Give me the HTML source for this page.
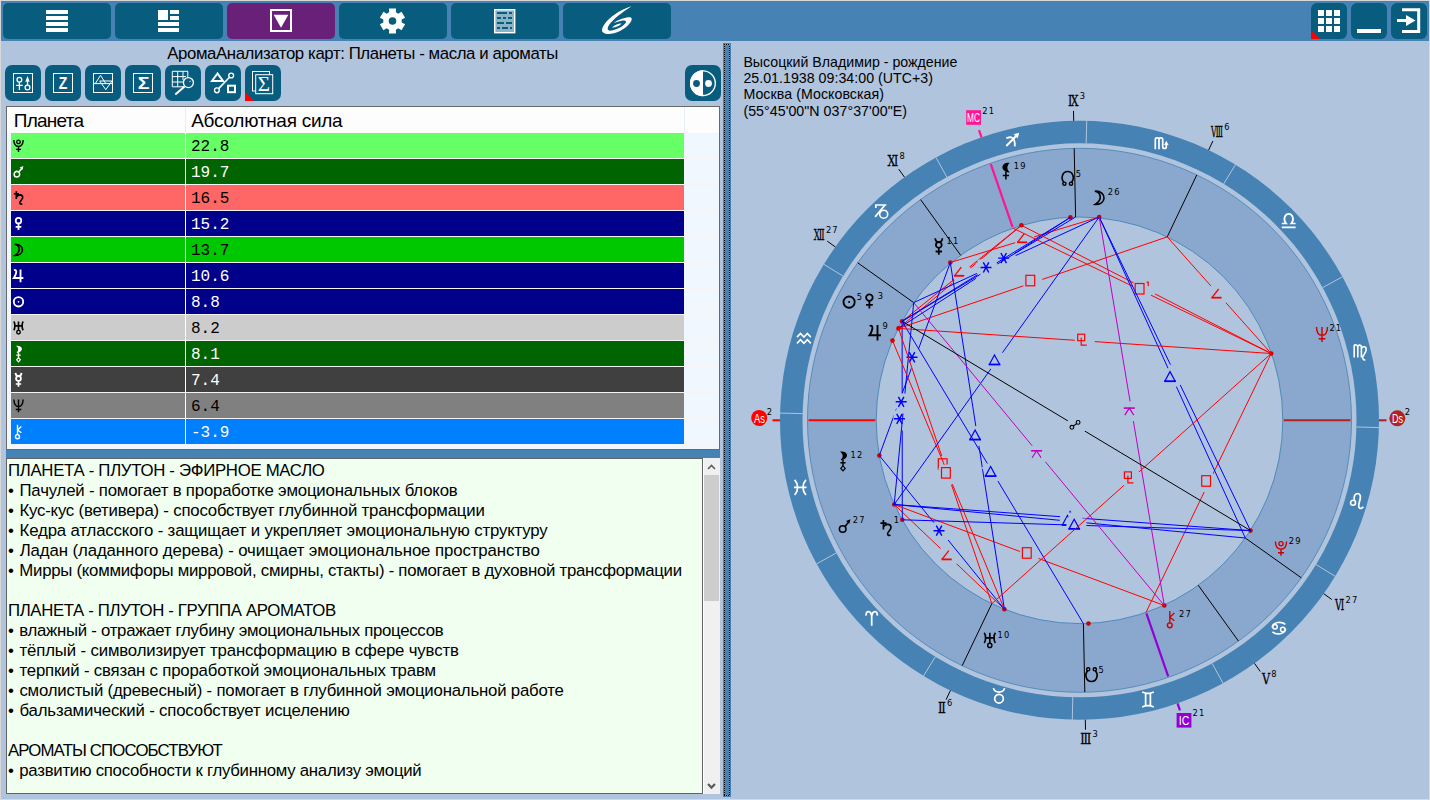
<!DOCTYPE html><html lang="ru"><head><meta charset="utf-8"><title>АромаАнализатор карт</title><style>
html,body{margin:0;padding:0}
body{width:1430px;height:800px;background:#b0c4de;position:relative;overflow:hidden;font-family:"Liberation Sans",sans-serif;color:#000}
.abs{position:absolute}
#frame{position:absolute;left:0;top:0;width:1430px;height:800px;border:1px solid #d8d8d8;box-sizing:border-box;pointer-events:none;z-index:9}
#topbar{position:absolute;left:1px;top:1px;width:1428px;height:40px;background:#4682b4}
.tb{position:absolute;top:2px;height:36px;width:108px;background:#085d7e;border-radius:5px}
.sb{position:absolute;top:2px;height:36px;width:36px;background:#085d7e;border-radius:6px}
.b2{position:absolute;top:65px;height:36px;width:36px;background:#085d7e;border-radius:7px}
.tb svg,.sb svg,.b2 svg{position:absolute;left:0;top:0}
#title{position:absolute;left:167.3px;top:43.6px;white-space:pre;font-size:16.8px;line-height:20px}
#tbl{position:absolute;left:6px;top:106px;width:714px;height:344px;background:#fdfdfd;border:1px solid #696969;box-sizing:border-box}
.hd{position:absolute;top:0;height:26px;font-size:19px;line-height:26px}
.row{position:absolute;left:4px;width:673px;height:25px}
.row .g{position:absolute;left:1px;top:0;width:20px;height:25px;font-family:"DejaVu Sans",sans-serif;font-size:15px;line-height:25px}
.row .v{position:absolute;left:180px;top:1.6px;height:25px;font-family:"Liberation Mono",monospace;font-size:16px;line-height:25px}
.row .sep{position:absolute;left:174px;top:0;width:1px;height:25px;background:#fff}
#hsplit{position:absolute;left:6px;top:450px;width:714px;height:8px;background:#4682b4}
#txt{position:absolute;left:6px;top:458px;width:697px;height:336px;background:#f0fff0;border:1px solid #646464;box-sizing:border-box;overflow:hidden}
#txt div{position:absolute;left:1px;white-space:pre;font-size:16.8px;line-height:20px;height:20px}
#sbar{position:absolute;left:703px;top:458px;width:17px;height:336px;background:#f0f0f0;border-left:1px solid #fff;box-sizing:border-box}
#thumb{position:absolute;left:0px;top:17px;width:15px;height:126px;background:#cdcdcd}
#vsplit{position:absolute;left:723px;top:43px;width:8px;height:754px;background:#4682b4}
#vsplit i{position:absolute;display:block}
#vsplit .l{left:1px;top:1px;width:1px;height:752px;background:repeating-linear-gradient(180deg,#000 0,#000 1px,#c88040 1px,#c88040 2px)}
#vsplit .r{left:6px;top:1px;width:1px;height:752px;background:repeating-linear-gradient(180deg,#000 0,#000 1px,#c88040 1px,#c88040 2px)}
#vsplit .t{left:1px;top:1px;width:6px;height:1px;background:repeating-linear-gradient(90deg,#000 0,#000 1px,#c88040 1px,#c88040 2px)}
#vsplit .b{left:1px;top:752px;width:6px;height:1px;background:repeating-linear-gradient(90deg,#000 0,#000 1px,#c88040 1px,#c88040 2px)}
.inf{position:absolute;left:743.4px;font-size:14.2px;line-height:16.4px;height:16.4px;white-space:pre}
</style></head><body><div id="topbar"><div class="tb" style="left:2px;"><svg width="108" height="36" viewBox="0 0 108 36"><rect x="43" y="7" width="22" height="4" fill="#fff"/><rect x="43" y="13" width="22" height="4" fill="#fff"/><rect x="43" y="19" width="22" height="4" fill="#fff"/><rect x="43" y="25" width="22" height="4" fill="#fff"/></svg></div><div class="tb" style="left:114px;"><svg width="108" height="36" viewBox="0 0 108 36"><rect x="43" y="7" width="10" height="10" fill="#fff"/><rect x="55" y="7" width="9" height="4" fill="#fff"/><rect x="55" y="13" width="9" height="4" fill="#fff"/><rect x="43" y="19" width="21" height="4" fill="#fff"/><rect x="43" y="25" width="21" height="4" fill="#fff"/></svg></div><div class="tb" style="left:226px;background:#682079;"><svg width="108" height="36" viewBox="0 0 108 36"><rect x="44" y="7" width="20" height="21" fill="none" stroke="#fff" stroke-width="2"/><path d="M46.7 11.8 L61.3 11.8 L54 24.7 Z" fill="#fff"/></svg></div><div class="tb" style="left:338px;"><svg width="108" height="36" viewBox="0 0 108 36"><path fill-rule="evenodd" fill="#fff" d="M50.17 9.32 L49.92 5.50 L57.08 5.50 L56.83 9.32 L59.35 10.77 L62.53 8.65 L66.11 14.86 L62.69 16.55 L62.69 19.45 L66.11 21.14 L62.53 27.35 L59.35 25.23 L56.83 26.68 L57.08 30.50 L49.92 30.50 L50.17 26.68 L47.65 25.23 L44.47 27.35 L40.89 21.14 L44.31 19.45 L44.31 16.55 L40.89 14.86 L44.47 8.65 L47.65 10.77 Z M53.50 18.00 m-3.8 0 a3.8 3.8 0 1 0 7.6 0 a3.8 3.8 0 1 0 -7.6 0Z"/></svg></div><div class="tb" style="left:450px;"><svg width="108" height="36" viewBox="0 0 108 36"><rect x="43.7" y="6.7" width="20" height="23" fill="#8ab3c6" stroke="#fff" stroke-width="1.4"/><rect x="46" y="9" width="10" height="2" fill="#085d7e"/><rect x="58" y="9" width="3" height="2" fill="#085d7e"/><rect x="46" y="14" width="4" height="2" fill="#085d7e"/><rect x="52" y="14" width="3" height="2" fill="#085d7e"/><rect x="57" y="14" width="4" height="2" fill="#085d7e"/><rect x="46" y="19" width="7" height="2" fill="#085d7e"/><rect x="55" y="19" width="6" height="2" fill="#085d7e"/><rect x="46" y="24" width="3" height="2" fill="#085d7e"/><rect x="51" y="24" width="6" height="2" fill="#085d7e"/><rect x="59" y="24" width="2" height="2" fill="#085d7e"/></svg></div><div class="tb" style="left:562px;"><svg width="108" height="36" viewBox="0 0 108 36"><path fill="#fff" d="M68.5 3.2 C56.0 6.6 39.6 18.5 39.0 27.5 C39.5 32.0 49.0 32.0 57.0 28.0 C64.0 24.5 70.0 18.0 68.5 15.0 C67.0 13.0 57.0 15.5 50.5 20.0 C55.0 18.5 62.0 16.0 63.0 18.5 C63.5 21.0 56.0 26.0 49.0 27.5 C43.0 28.5 44.0 24.0 48.0 19.5 C53.5 13.0 63.0 7.0 68.5 3.2 Z"/><path fill="#fff" d="M49.0 24.5 C52.0 21.5 57.0 20.0 58.5 20.5 C57.0 22.5 53.0 24.5 49.0 24.5 Z"/></svg></div><div class="sb" style="left:1310px;"><svg width="36" height="36" viewBox="0 0 36 36"><rect x="7" y="7" width="6" height="6" fill="#fff"/><rect x="7" y="15" width="6" height="6" fill="#fff"/><rect x="7" y="23" width="6" height="6" fill="#fff"/><rect x="15" y="7" width="6" height="6" fill="#fff"/><rect x="15" y="15" width="6" height="6" fill="#fff"/><rect x="15" y="23" width="6" height="6" fill="#fff"/><rect x="23" y="7" width="6" height="6" fill="#fff"/><rect x="23" y="15" width="6" height="6" fill="#fff"/><rect x="23" y="23" width="6" height="6" fill="#fff"/><path d="M0 27 L0 36 L9 36 Z" fill="#f00"/></svg></div><div class="sb" style="left:1350px;"><svg width="36" height="36" viewBox="0 0 36 36"><rect x="6" y="26" width="24" height="4" fill="#fff"/></svg></div><div class="sb" style="left:1390px;"><svg width="36" height="36" viewBox="0 0 36 36"><path d="M11 6.7 H27.7 V28.5 H11" fill="none" stroke="#fff" stroke-width="3"/><rect x="6" y="16" width="11" height="3" fill="#fff"/><path d="M15 12 L24.5 17.5 L15 23 Z" fill="#fff"/></svg></div></div><div id="title" style="letter-spacing:-0.400px">АромаАнализатор карт: Планеты - масла и ароматы</div><div class="b2" style="left:5px"><svg width="36" height="36" viewBox="0 0 36 36"><rect x="8.5" y="8.5" width="19" height="19" fill="none" stroke="#fff" stroke-width="1"/><circle cx="14.4" cy="14.7" r="2.4" fill="none" stroke="#fff" stroke-width="1.3"/><path d="M14.4 17.2V25 M11.2 20.3H17.7" stroke="#fff" stroke-width="1.3" fill="none"/><circle cx="22.5" cy="22.5" r="2.4" fill="none" stroke="#fff" stroke-width="1.3"/><path d="M22.5 20V14" stroke="#fff" stroke-width="1.3"/><path d="M20.3 16.8 L22.5 11 L24.7 16.8Z" fill="#fff"/></svg></div><div class="b2" style="left:45px"><svg width="36" height="36" viewBox="0 0 36 36"><rect x="8.5" y="8.5" width="19" height="19" fill="none" stroke="#fff" stroke-width="1"/><text x="13.7" y="24.2" textLength="8.6" lengthAdjust="spacingAndGlyphs" font-family="Liberation Sans,sans-serif" font-weight="bold" font-size="16.5" fill="#fff">Z</text></svg></div><div class="b2" style="left:85px"><svg width="36" height="36" viewBox="0 0 36 36"><rect x="8.5" y="8.5" width="19" height="19" fill="none" stroke="#fff" stroke-width="1"/><path d="M8.5 18.6H27.5 M10.3 18.6 L15.5 10.3 L20.8 18.6 M14.7 16 H26.9 L20.8 24.7 Z" fill="none" stroke="#fff" stroke-width="1"/></svg></div><div class="b2" style="left:125px"><svg width="36" height="36" viewBox="0 0 36 36"><rect x="8.5" y="8.5" width="19" height="19" fill="none" stroke="#fff" stroke-width="1"/><text x="12.8" y="24.1" textLength="11.8" lengthAdjust="spacingAndGlyphs" font-family="Liberation Sans,sans-serif" font-weight="bold" font-size="17" fill="#fff">Σ</text></svg></div><div class="b2" style="left:165px"><svg width="36" height="36" viewBox="0 0 36 36"><path d="M7.3 6.3 H23 M7.3 11.6 H21 M7.3 17 H18 M7.3 21.8 H19 M7.3 6.3 V21.8 M12.7 6.3 V21.8 M18 6.3 V15 M22.8 6.3 V12" fill="none" stroke="#fff" stroke-width="1"/><circle cx="23.4" cy="17.6" r="5" fill="#085d7e" stroke="#fff" stroke-width="1.3"/><path d="M19.6 21.4 L10.3 29.5" stroke="#fff" stroke-width="2"/><path d="M24.5 17 l1.2 -1.2" stroke="#fff" stroke-width="1"/></svg></div><div class="b2" style="left:205px"><svg width="36" height="36" viewBox="0 0 36 36"><path d="M12.5 8.5 L7 16 L18 16 Z" fill="none" stroke="#fff" stroke-width="2"/><path d="M24.5 12.3 L13.6 23.6" stroke="#fff" stroke-width="1.6"/><circle cx="26.2" cy="10.5" r="2.4" fill="#085d7e" stroke="#fff" stroke-width="1.4"/><circle cx="11.9" cy="25.3" r="2.4" fill="#085d7e" stroke="#fff" stroke-width="1.4"/><rect x="23" y="20.7" width="7" height="6.5" fill="none" stroke="#fff" stroke-width="2"/></svg></div><div class="b2" style="left:245px"><svg width="36" height="36" viewBox="0 0 36 36"><rect x="7.5" y="6.5" width="17" height="19.5" fill="none" stroke="#fff" stroke-width="1"/><rect x="10.7" y="9.7" width="17" height="19" fill="#085d7e" stroke="#fff" stroke-width="1"/><text x="12.8" y="25.5" textLength="12.2" lengthAdjust="spacingAndGlyphs" font-family="Liberation Serif,serif" font-size="20" fill="#fff">Σ</text><path d="M0 27 L0 36 L9 36 Z" fill="#f00"/></svg></div><div class="b2" style="left:685px"><svg width="36" height="36" viewBox="0 0 36 36"><circle cx="18" cy="18.2" r="12.3" fill="#085d7e" stroke="#fff" stroke-width="1.4"/><path d="M18 5.2 A13 13 0 0 0 18 31.2 Z" fill="#fff"/><circle cx="11.5" cy="18.5" r="3.4" fill="#085d7e"/><circle cx="23.5" cy="18.5" r="3.4" fill="#fff"/></svg></div><div id="tbl"><div class="hd" id="hd0" style="left:6.8px;top:0.6px;letter-spacing:-0.756px">Планета</div><div class="hd" id="hd1" style="left:184.2px;top:0.6px;letter-spacing:-0.268px">Абсолютная сила</div><div class="abs" style="left:178px;top:0;width:1px;height:26px;background:#e6eef8"></div><div class="abs" style="left:677px;top:0;width:1px;height:26px;background:#e6eef8"></div><div class="abs" style="left:0;top:26px;width:712px;height:316px;background:#f0f7ff"></div><div class="row" style="top:26px;background:#66ff66;color:#000"><svg class="abs" style="left:0;top:0" width="30" height="25"><g transform="translate(7.5 12.8) scale(0.84)" stroke="#000" fill="none" stroke-linecap="butt" stroke-linejoin="miter"><path d="M-5.6 -6.8C-5.4 -1 -3 0.8 0 0.8C3 0.8 5.4 -1 5.6 -6.8M0 0.8V7.4M-3 4.3H3" stroke-width="1.69"/><circle cx="0" cy="-4.6" r="2.1" stroke-width="1.56"/></g></svg><span class="sep"></span><span class="v">22.8</span></div><div class="abs" style="left:0;top:51px;width:712px;height:1px;background:#f4f4f4"></div><div class="row" style="top:52px;background:#006400;color:#fff"><svg class="abs" style="left:0;top:0" width="30" height="25"><g transform="translate(7.5 12.8) scale(0.84)" stroke="#fff" fill="none" stroke-linecap="butt" stroke-linejoin="miter"><circle cx="-1.9" cy="2.8" r="3.3" stroke-width="1.82"/><path d="M0.5 0.3L4.6 -4.9" stroke-width="1.82"/><path d="M5.9 -7L1.4 -5.1L4.7 -2.4Z" fill="#fff" stroke="none"/></g></svg><span class="sep"></span><span class="v">19.7</span></div><div class="abs" style="left:0;top:77px;width:712px;height:1px;background:#f4f4f4"></div><div class="row" style="top:78px;background:#ff6666;color:#000"><svg class="abs" style="left:0;top:0" width="30" height="25"><g transform="translate(7.5 12.8) scale(0.84)" stroke="#000" fill="none" stroke-linecap="butt" stroke-linejoin="miter"><path d="M-2.6 -7.8V1.5M-5.6 -4.8H0.6M-2.6 -1C-0.5 -4.4 4.6 -4.2 5 -0.9C5.4 2.2 1.4 3.6 1.6 6C1.8 7.6 3.2 8 4.4 7" stroke-width="1.95"/></g></svg><span class="sep"></span><span class="v">16.5</span></div><div class="abs" style="left:0;top:103px;width:712px;height:1px;background:#f4f4f4"></div><div class="row" style="top:104px;background:#00008b;color:#fff"><svg class="abs" style="left:0;top:0" width="30" height="25"><g transform="translate(7.5 12.8) scale(0.84)" stroke="#fff" fill="none" stroke-linecap="butt" stroke-linejoin="miter"><circle cx="0" cy="-3.7" r="3.3" stroke-width="2.08"/><path d="M0 -0.4V7.3M-3.4 3.6H3.4" stroke-width="2.08"/></g></svg><span class="sep"></span><span class="v">15.2</span></div><div class="abs" style="left:0;top:129px;width:712px;height:1px;background:#f4f4f4"></div><div class="row" style="top:130px;background:#00c800;color:#000"><svg class="abs" style="left:0;top:0" width="30" height="25"><g transform="translate(7.5 12.8) scale(0.84)" stroke="#000" fill="none" stroke-linecap="butt" stroke-linejoin="miter"><path d="M-4.6 -6.6C2 -7 5 -3 4.6 0.5C4.2 4 1 6.8 -4.2 6.6C-0.5 4.2 1.2 1.5 0.8 -1.5C0.5 -4 -1.5 -6 -4.6 -6.6Z" stroke-width="1.95"/></g></svg><span class="sep"></span><span class="v">13.7</span></div><div class="abs" style="left:0;top:155px;width:712px;height:1px;background:#f4f4f4"></div><div class="row" style="top:156px;background:#00008b;color:#fff"><svg class="abs" style="left:0;top:0" width="30" height="25"><g transform="translate(7.5 12.8) scale(0.84)" stroke="#fff" fill="none" stroke-linecap="butt" stroke-linejoin="miter"><path d="M-5.4 -6.6C-3.6 -7.6 -2.2 -6.4 -2.8 -3.6C-3.2 -1.6 -4.2 0.8 -5.6 2.6H5.8M2.4 -7.6V7.8" stroke-width="2.21"/></g></svg><span class="sep"></span><span class="v">10.6</span></div><div class="abs" style="left:0;top:181px;width:712px;height:1px;background:#f4f4f4"></div><div class="row" style="top:182px;background:#00008b;color:#fff"><svg class="abs" style="left:0;top:0" width="30" height="25"><g transform="translate(7.5 12.8) scale(0.84)" stroke="#fff" fill="none" stroke-linecap="butt" stroke-linejoin="miter"><circle cx="0" cy="0" r="5.6" stroke-width="2.21"/><circle cx="0" cy="0" r="1" fill="#fff" stroke="none"/></g></svg><span class="sep"></span><span class="v">8.8</span></div><div class="abs" style="left:0;top:207px;width:712px;height:1px;background:#f4f4f4"></div><div class="row" style="top:208px;background:#cccccc;color:#000"><svg class="abs" style="left:0;top:0" width="30" height="25"><g transform="translate(7.5 12.8) scale(0.84)" stroke="#000" fill="none" stroke-linecap="butt" stroke-linejoin="miter"><path d="M-5.6 -7.4C-3.8 -5.2 -3.8 0.6 -5.6 2.8M5.6 -7.4C3.8 -5.2 3.8 0.6 5.6 2.8M-4.2 -2.3H4.2M0 -7.4V3" stroke-width="1.95"/><circle cx="0" cy="5.2" r="2.1" stroke-width="1.69"/></g></svg><span class="sep"></span><span class="v">8.2</span></div><div class="abs" style="left:0;top:233px;width:712px;height:1px;background:#f4f4f4"></div><div class="row" style="top:234px;background:#006400;color:#fff"><svg class="abs" style="left:0;top:0" width="30" height="25"><g transform="translate(7.5 12.8) scale(0.84)" stroke="#fff" fill="none" stroke-linecap="butt" stroke-linejoin="miter"><path d="M-3 -9.5C5.3 -10.4 7 -3 -1.6 -1C-2 -1 -2.4 -1.4 -2 -1.8C0.6 -4.2 0.2 -7.4 -3 -9.5Z" fill="#fff" stroke="none"/><path d="M0 -1.6V4.6M-2.6 1.6H2.6" stroke-width="1.69"/><path d="M0 4.6L2.2 7.2L0 9.6L-2.2 7.2Z" stroke-width="1.43"/></g></svg><span class="sep"></span><span class="v">8.1</span></div><div class="abs" style="left:0;top:259px;width:712px;height:1px;background:#f4f4f4"></div><div class="row" style="top:260px;background:#404040;color:#fff"><svg class="abs" style="left:0;top:0" width="30" height="25"><g transform="translate(7.5 12.8) scale(0.84)" stroke="#fff" fill="none" stroke-linecap="butt" stroke-linejoin="miter"><circle cx="0" cy="-1.6" r="2.9" stroke-width="2.08"/><path d="M-3.6 -8.2C-3.4 -5 -2 -4.5 0 -4.5C2 -4.5 3.4 -5 3.6 -8.2M0 1.3V8.2M-3.2 5H3.2" stroke-width="2.08"/></g></svg><span class="sep"></span><span class="v">7.4</span></div><div class="abs" style="left:0;top:285px;width:712px;height:1px;background:#f4f4f4"></div><div class="row" style="top:286px;background:#808080;color:#000"><svg class="abs" style="left:0;top:0" width="30" height="25"><g transform="translate(7.5 12.8) scale(0.84)" stroke="#000" fill="none" stroke-linecap="butt" stroke-linejoin="miter"><path d="M-5.5 -7.4C-5.3 -1 -3.2 1 0 1C3.2 1 5.3 -1 5.5 -7.4M0 -7.4V7.6M-3.3 4.5H3.3" stroke-width="1.69"/></g></svg><span class="sep"></span><span class="v">6.4</span></div><div class="abs" style="left:0;top:311px;width:712px;height:1px;background:#f4f4f4"></div><div class="row" style="top:312px;background:#0080ff;color:#fff"><svg class="abs" style="left:0;top:0" width="30" height="25"><g transform="translate(7.5 12.8) scale(0.84)" stroke="#fff" fill="none" stroke-linecap="butt" stroke-linejoin="miter"><path d="M-1.2 -8.4V3.4M-1.2 -2.2L3.4 -6.4M-1.2 -2.2L3.4 1.2" stroke-width="1.62"/><circle cx="-1.2" cy="5.8" r="2.4" stroke-width="1.69"/></g></svg><span class="sep"></span><span class="v">-3.9</span></div><div class="abs" style="left:0;top:337px;width:712px;height:1px;background:#f4f4f4"></div></div><div id="hsplit"></div><div id="txt"><div id="t0" style="top:1.6px;letter-spacing:-0.301px">ПЛАНЕТА - ПЛУТОН - ЭФИРНОЕ МАСЛО</div><div id="t1" style="top:21.6px;letter-spacing:-0.186px"><span style="margin-right:1.3px">•</span> Пачулей - помогает в проработке эмоциональных блоков</div><div id="t2" style="top:41.6px;letter-spacing:-0.207px"><span style="margin-right:1.3px">•</span> Кус-кус (ветивера) - способствует глубинной трансформации</div><div id="t3" style="top:61.6px;letter-spacing:-0.149px"><span style="margin-right:1.3px">•</span> Кедра атласского - защищает и укрепляет эмоциональную структуру</div><div id="t4" style="top:81.6px;letter-spacing:-0.097px"><span style="margin-right:1.3px">•</span> Ладан (ладанного дерева) - очищает эмоциональное пространство</div><div id="t5" style="top:101.6px;letter-spacing:-0.261px"><span style="margin-right:1.3px">•</span> Мирры (коммифоры мирровой, смирны, стакты) - помогает в духовной трансформации</div><div id="t6" style="top:141.6px;letter-spacing:-0.359px">ПЛАНЕТА - ПЛУТОН - ГРУППА АРОМАТОВ</div><div id="t7" style="top:161.6px;letter-spacing:-0.277px"><span style="margin-right:1.3px">•</span> влажный - отражает глубину эмоциональных процессов</div><div id="t8" style="top:181.6px;letter-spacing:-0.150px"><span style="margin-right:1.3px">•</span> тёплый - символизирует трансформацию в сфере чувств</div><div id="t9" style="top:201.6px;letter-spacing:-0.192px"><span style="margin-right:1.3px">•</span> терпкий - связан с проработкой эмоциональных травм</div><div id="t10" style="top:221.6px;letter-spacing:-0.207px"><span style="margin-right:1.3px">•</span> смолистый (древесный) - помогает в глубинной эмоциональной работе</div><div id="t11" style="top:241.6px;letter-spacing:-0.172px"><span style="margin-right:1.3px">•</span> бальзамический - способствует исцелению</div><div id="t12" style="top:281.6px;letter-spacing:-0.857px">АРОМАТЫ СПОСОБСТВУЮТ</div><div id="t13" style="top:301.6px;letter-spacing:-0.268px"><span style="margin-right:1.3px">•</span> развитию способности к глубинному анализу эмоций</div></div><div id="sbar"><div id="thumb"></div><svg class="abs" style="left:0;top:0" width="17" height="336"><path d="M4 11 L7.5 7.5 L11 11" fill="none" stroke="#606060" stroke-width="1.6"/><path d="M4 326 L7.5 329.6 L11 326" fill="none" stroke="#5a5a5a" stroke-width="2.2"/></svg></div><div id="vsplit"><i class="l"></i><i class="r"></i><i class="t"></i><i class="b"></i></div><div class="inf" id="inf0" style="top:53.6px;letter-spacing:0.005px">Высоцкий Владимир - рождение</div><div class="inf" id="inf1" style="top:70.0px;letter-spacing:0.026px">25.01.1938 09:34:00 (UTC+3)</div><div class="inf" id="inf2" style="top:86.4px;letter-spacing:0.052px">Москва (Московская)</div><div class="inf" id="inf3" style="top:102.8px;letter-spacing:0.046px">(55°45'00"N 037°37'00"E)</div><svg class="abs" style="left:732px;top:42px" width="698" height="758" viewBox="732 42 698 758"><circle cx="1079.5" cy="420.3" r="299.5" fill="#4682b4"/><circle cx="1079.5" cy="420.3" r="277" fill="#b0c4de"/><circle cx="1079.5" cy="420.3" r="272" fill="#8aa8ce" stroke="#4682b4" stroke-width="0.8"/><circle cx="1079.5" cy="420.3" r="203.3" fill="#b0c4de" stroke="#4682b4" stroke-width="0.9"/><path d="M836.3 553.0L816.6 563.8" stroke="#b0c4de" stroke-width="1"/><path d="M935.3 656.8L923.5 676.0" stroke="#b0c4de" stroke-width="1"/><path d="M1072.8 697.2L1072.3 719.7" stroke="#b0c4de" stroke-width="1"/><path d="M1212.2 663.5L1223.0 683.2" stroke="#b0c4de" stroke-width="1"/><path d="M1316.0 564.5L1335.2 576.3" stroke="#b0c4de" stroke-width="1"/><path d="M1356.4 427.0L1378.9 427.5" stroke="#b0c4de" stroke-width="1"/><path d="M1322.7 287.6L1342.4 276.8" stroke="#b0c4de" stroke-width="1"/><path d="M1223.7 183.8L1235.5 164.6" stroke="#b0c4de" stroke-width="1"/><path d="M1086.2 143.4L1086.7 120.9" stroke="#b0c4de" stroke-width="1"/><path d="M946.8 177.1L936.0 157.4" stroke="#b0c4de" stroke-width="1"/><path d="M843.0 276.1L823.8 264.3" stroke="#b0c4de" stroke-width="1"/><path d="M802.6 413.6L780.1 413.1" stroke="#b0c4de" stroke-width="1"/><g transform="translate(871.7 618.3) scale(1.08)" stroke="#fff" fill="none" stroke-linecap="butt" stroke-linejoin="miter"><path d="M-5.2 -2.5C-5.6 -7.5 -0.6 -7.5 0 -1.5V7M0 -1.5C0.6 -7.5 5.6 -7.5 5.2 -2.5" stroke-width="1.60"/></g><g transform="translate(999.0 695.9) scale(1.08)" stroke="#fff" fill="none" stroke-linecap="butt" stroke-linejoin="miter"><circle cx="0" cy="2.6" r="4" stroke-width="1.60"/><path d="M-5.2 -7.2C-3.8 -2.4 3.8 -2.4 5.2 -7.2" stroke-width="1.60"/></g><g transform="translate(1148.0 699.5) scale(1.08)" stroke="#fff" fill="none" stroke-linecap="butt" stroke-linejoin="miter"><path d="M-5.4 -7C-2 -5.4 2 -5.4 5.4 -7M-5.4 7C-2 5.4 2 5.4 5.4 7M-2.2 -5.8V5.8M2.2 -5.8V5.8" stroke-width="1.60"/></g><g transform="translate(1278.9 628.1) scale(1.08)" stroke="#fff" fill="none" stroke-linecap="butt" stroke-linejoin="miter"><path d="M-6.3 -0.6C-5.5 -6 2.5 -6.5 6 -3.4M6.3 0.6C5.5 6 -2.5 6.5 -6 3.4" stroke-width="1.50"/><circle cx="-3.6" cy="-1.3" r="2.1" stroke-width="1.40"/><circle cx="3.6" cy="1.3" r="2.1" stroke-width="1.40"/></g><g transform="translate(1356.5 500.8) scale(1.08)" stroke="#fff" fill="none" stroke-linecap="butt" stroke-linejoin="miter"><circle cx="-3.2" cy="1.8" r="2.3" stroke-width="1.50"/><path d="M-1.6 0.3C-4.6 -7.5 4.2 -9 3.6 -3C3.2 1 0.6 5 2.8 6.6C4 7.4 5.6 6.8 6.2 5.4" stroke-width="1.60"/></g><g transform="translate(1360.1 351.8) scale(1)" stroke="#fff" fill="none" stroke-linecap="butt" stroke-linejoin="miter"><path d="M-5.9 5.6V-6.2C-5.6 -7.4 -2.3 -7 -2.3 -5V5.6M-2.3 -5C-2 -7.4 1.3 -7 1.3 -5V5.6M1.3 -3.2C2.8 -6.2 6.6 -5.4 6 -1.6C5.6 1.4 3 3 2.6 5.6C2.4 7.4 3.6 8.5 5.2 8" stroke-width="1.60"/></g><g transform="translate(1288.7 220.9) scale(1.08)" stroke="#fff" fill="none" stroke-linecap="butt" stroke-linejoin="miter"><path d="M-6.4 6H6.4M-6.4 2.4H-2.4C-5.6 -1 -3.6 -6.4 0 -6.4C3.6 -6.4 5.6 -1 2.4 2.4H6.4" stroke-width="1.60"/></g><g transform="translate(1161.4 143.3) scale(1)" stroke="#fff" fill="none" stroke-linecap="butt" stroke-linejoin="miter"><path d="M-6.1 6V-4.4C-6.1 -5.8 -2.4 -5.8 -2.4 -4.4V6M-2.4 -4.4C-2.4 -5.8 1.3 -5.8 1.3 -4.4V3.4C1.3 5.8 4.9 5.8 4.9 3.4V1.2" stroke-width="1.70"/><path d="M4.9 -2.6L2.6 1.8H7.2Z" fill="#fff" stroke="none"/></g><g transform="translate(1012.4 139.7) scale(1)" stroke="#fff" fill="none" stroke-linecap="butt" stroke-linejoin="miter"><path d="M-6.1 6.3L4.2 -4.2M-6.1 -1.4C-2 -3.2 0.6 -2.6 1.6 0C2.6 2.6 2.7 4.6 2.4 6.6" stroke-width="1.80"/><path d="M6.8 -6.9L1.2 -5.4L5.3 -1.2Z" fill="#fff" stroke="none"/></g><g transform="translate(881.5 211.1) scale(1)" stroke="#fff" fill="none" stroke-linecap="butt" stroke-linejoin="miter"><path d="M-5.7 -3.2V-6.1H4.8M3.5 -6.1L-6.4 5.8" stroke-width="1.70"/><circle cx="2.2" cy="3.1" r="4" stroke-width="1.60"/></g><g transform="translate(803.9 338.4) scale(1.08)" stroke="#fff" fill="none" stroke-linecap="butt" stroke-linejoin="miter"><path d="M-6.4 -1.2L-3.2 -4.6L0 -1.2L3.2 -4.6L6.4 -1.2M-6.4 4.6L-3.2 1.2L0 4.6L3.2 1.2L6.4 4.6" stroke-width="1.50"/></g><g transform="translate(800.3 487.4) scale(1.08)" stroke="#fff" fill="none" stroke-linecap="butt" stroke-linejoin="miter"><path d="M-5.2 -7C-1.6 -3 -1.6 3 -5.2 7M5.2 -7C1.6 -3 1.6 3 5.2 7M-5.8 0H5.8" stroke-width="1.60"/></g><path d="M875.2 420.3L808.5 420.3" stroke="#ff0000" stroke-width="2.1"/><path d="M780.0 420.3L772.5 420.3" stroke="#ff0000" stroke-width="2.1"/><circle cx="759.2" cy="418.0" r="8" fill="#ff0000"/><text x="759.4" y="422.9" font-family="Liberation Sans, sans-serif" font-size="13.5" fill="#fff" text-anchor="middle" textLength="11" lengthAdjust="spacingAndGlyphs">As</text><text x="766.7" y="414.6" font-family="DejaVu Sans, sans-serif" font-size="8.3" fill="#000" letter-spacing="1.2">2</text><path d="M991.8 603.7L962.2 665.7" stroke="#000" stroke-width="1"/><path d="M950.4 690.5L946.1 699.6" stroke="#000" stroke-width="1"/><text x="938.0" y="713.0" font-family="DejaVu Serif, serif" font-size="15" fill="#000" stroke="#000" stroke-width="0.3" textLength="7.8" lengthAdjust="spacingAndGlyphs">Ⅱ</text><text x="947.0" y="706.1" font-family="DejaVu Sans, sans-serif" font-size="8.3" fill="#000" letter-spacing="1.2">6</text><path d="M1083.4 623.6L1084.8 692.2" stroke="#000" stroke-width="1"/><path d="M1085.3 719.7L1085.5 729.7" stroke="#000" stroke-width="1"/><text x="1080.2" y="744.1" font-family="DejaVu Serif, serif" font-size="15" fill="#000" stroke="#000" stroke-width="0.3" textLength="11" lengthAdjust="spacingAndGlyphs">Ⅲ</text><text x="1092.4" y="737.2" font-family="DejaVu Sans, sans-serif" font-size="8.3" fill="#000" letter-spacing="1.2">3</text><path d="M1146.4 613.4L1168.2 676.4" stroke="#9400d3" stroke-width="2.2"/><path d="M1177.5 703.3L1180.0 710.4" stroke="#9400d3" stroke-width="2.2"/><rect x="1176.6" y="713.0" width="14.8" height="14.6" fill="#9400d3"/><text x="1178.8" y="725.0" font-family="Liberation Sans, sans-serif" font-size="13" fill="#fff" textLength="10.6" lengthAdjust="spacingAndGlyphs">IC</text><text x="1192.6" y="716.3" font-family="DejaVu Sans, sans-serif" font-size="8.3" fill="#000" letter-spacing="1.2">21</text><path d="M1198.3 585.3L1238.4 641.0" stroke="#000" stroke-width="1"/><path d="M1254.5 663.4L1260.3 671.5" stroke="#000" stroke-width="1"/><text x="1261.9" y="684.1" font-family="DejaVu Serif, serif" font-size="15" fill="#000" stroke="#000" stroke-width="0.3" textLength="8.2" lengthAdjust="spacingAndGlyphs">Ⅴ</text><text x="1271.3" y="677.2" font-family="DejaVu Sans, sans-serif" font-size="8.3" fill="#000" letter-spacing="1.2">8</text><path d="M1245.3 538.0L1301.3 577.8" stroke="#000" stroke-width="1"/><path d="M1323.7 593.7L1331.8 599.5" stroke="#000" stroke-width="1"/><text x="1335.1" y="609.8" font-family="DejaVu Serif, serif" font-size="15" fill="#000" stroke="#000" stroke-width="0.3" textLength="9.3" lengthAdjust="spacingAndGlyphs">Ⅵ</text><text x="1345.6" y="602.9" font-family="DejaVu Sans, sans-serif" font-size="8.3" fill="#000" letter-spacing="1.2">27</text><path d="M1283.8 420.3L1350.5 420.3" stroke="#b22222" stroke-width="2.1"/><path d="M1379.0 420.3L1386.5 420.3" stroke="#b22222" stroke-width="2.1"/><circle cx="1397.3" cy="418.3" r="8" fill="#b22222"/><text x="1397.5" y="423.2" font-family="Liberation Sans, sans-serif" font-size="13.5" fill="#fff" text-anchor="middle" textLength="11" lengthAdjust="spacingAndGlyphs">Ds</text><text x="1404.8" y="414.9" font-family="DejaVu Sans, sans-serif" font-size="8.3" fill="#000" letter-spacing="1.2">2</text><path d="M1167.2 236.9L1196.8 174.9" stroke="#000" stroke-width="1"/><path d="M1208.6 150.1L1212.9 141.0" stroke="#000" stroke-width="1"/><text x="1211.1" y="137.0" font-family="DejaVu Serif, serif" font-size="15" fill="#000" stroke="#000" stroke-width="0.3" textLength="12" lengthAdjust="spacingAndGlyphs">Ⅷ</text><text x="1224.3" y="130.1" font-family="DejaVu Sans, sans-serif" font-size="8.3" fill="#000" letter-spacing="1.2">6</text><path d="M1075.6 217.0L1074.2 148.4" stroke="#000" stroke-width="1"/><path d="M1073.7 120.9L1073.5 110.9" stroke="#000" stroke-width="1"/><text x="1068.1" y="105.9" font-family="DejaVu Serif, serif" font-size="15" fill="#000" stroke="#000" stroke-width="0.3" textLength="10.5" lengthAdjust="spacingAndGlyphs">Ⅸ</text><text x="1079.8" y="99.0" font-family="DejaVu Sans, sans-serif" font-size="8.3" fill="#000" letter-spacing="1.2">3</text><path d="M1012.6 227.2L990.8 164.2" stroke="#ff1493" stroke-width="2.2"/><path d="M981.5 137.3L979.0 130.2" stroke="#ff1493" stroke-width="2.2"/><rect x="966.2" y="110.2" width="14.8" height="14.6" fill="#ff1493"/><text x="967.1" y="122.2" font-family="Liberation Sans, sans-serif" font-size="13" fill="#fff" textLength="13" lengthAdjust="spacingAndGlyphs">MC</text><text x="982.2" y="113.5" font-family="DejaVu Sans, sans-serif" font-size="8.3" fill="#000" letter-spacing="1.2">21</text><path d="M960.7 255.3L920.6 199.6" stroke="#000" stroke-width="1"/><path d="M904.5 177.2L898.7 169.1" stroke="#000" stroke-width="1"/><text x="887.6" y="165.9" font-family="DejaVu Serif, serif" font-size="15" fill="#000" stroke="#000" stroke-width="0.3" textLength="10.8" lengthAdjust="spacingAndGlyphs">Ⅺ</text><text x="899.6" y="159.0" font-family="DejaVu Sans, sans-serif" font-size="8.3" fill="#000" letter-spacing="1.2">8</text><path d="M913.7 302.6L857.7 262.8" stroke="#000" stroke-width="1"/><path d="M835.3 246.9L827.2 241.1" stroke="#000" stroke-width="1"/><text x="813.8" y="240.2" font-family="DejaVu Serif, serif" font-size="15" fill="#000" stroke="#000" stroke-width="0.3" textLength="10.9" lengthAdjust="spacingAndGlyphs">Ⅻ</text><text x="825.9" y="233.3" font-family="DejaVu Sans, sans-serif" font-size="8.3" fill="#000" letter-spacing="1.2">27</text><circle cx="902.1" cy="321.3" r="2.3" fill="#cc0000"/><circle cx="898.5" cy="328.4" r="2.3" fill="#cc0000"/><circle cx="892.5" cy="340.6" r="2.3" fill="#cc0000"/><circle cx="950.3" cy="262.5" r="2.3" fill="#cc0000"/><circle cx="1021.4" cy="225.3" r="2.3" fill="#cc0000"/><circle cx="1070.4" cy="217.4" r="2.3" fill="#cc0000"/><circle cx="1099.2" cy="217.0" r="2.3" fill="#cc0000"/><circle cx="1271.2" cy="353.5" r="2.3" fill="#cc0000"/><circle cx="1250.5" cy="530.6" r="2.3" fill="#cc0000"/><circle cx="1164.3" cy="605.5" r="2.3" fill="#cc0000"/><circle cx="1088.5" cy="623.5" r="2.3" fill="#cc0000"/><circle cx="1004.4" cy="609.2" r="2.3" fill="#cc0000"/><circle cx="902.3" cy="519.8" r="2.3" fill="#cc0000"/><circle cx="894.2" cy="504.5" r="2.3" fill="#cc0000"/><circle cx="879.3" cy="455.5" r="2.3" fill="#cc0000"/><path d="M898.5 328.4L1021.4 225.3" stroke="#ff0000" stroke-width="1" fill="none"/><path d="M952.3 283.3L967.6 270.4" stroke="#b0c4de" stroke-width="14" fill="none"/><rect x="951.3" y="267.5" width="13" height="14.5" fill="#b0c4de"/><path d="M959.5 270.7L952.7 279.4" stroke="#ff0000" fill="none" stroke-width="1.3"/><path d="M952.2 279.4H962.4" stroke="#ff0000" fill="none" stroke-width="1.8"/><path d="M1099.2 217.0L950.3 262.5" stroke="#ff0000" stroke-width="1" fill="none"/><path d="M1034.3 236.8L1015.2 242.7" stroke="#b0c4de" stroke-width="14" fill="none"/><rect x="1016.1" y="230.4" width="13" height="14.5" fill="#b0c4de"/><path d="M1024.3 233.6L1017.5 242.3" stroke="#ff0000" fill="none" stroke-width="1.3"/><path d="M1017.0 242.3H1027.2" stroke="#ff0000" fill="none" stroke-width="1.8"/><path d="M902.1 321.3L1021.4 225.3" stroke="#ff0000" stroke-width="1" fill="none"/><path d="M954.0 279.6L969.5 267.0" stroke="#b0c4de" stroke-width="14" fill="none"/><rect x="953.1" y="263.9" width="13" height="14.5" fill="#b0c4de"/><path d="M961.3 267.1L954.5 275.8" stroke="#ff0000" fill="none" stroke-width="1.3"/><path d="M954.0 275.8H964.2" stroke="#ff0000" fill="none" stroke-width="1.8"/><path d="M894.2 504.5L1004.4 609.2" stroke="#ff0000" stroke-width="1" fill="none"/><path d="M942.0 550.0L956.5 563.8" stroke="#b0c4de" stroke-width="14" fill="none"/><rect x="940.6" y="547.5" width="13" height="14.5" fill="#b0c4de"/><path d="M948.8 550.7L942.0 559.4" stroke="#ff0000" fill="none" stroke-width="1.3"/><path d="M941.5 559.4H951.7" stroke="#ff0000" fill="none" stroke-width="1.8"/><path d="M1271.2 353.5L1167.2 236.9" stroke="#ff0000" stroke-width="1" fill="none"/><path d="M1225.8 302.6L1212.5 287.7" stroke="#b0c4de" stroke-width="14" fill="none"/><rect x="1210.5" y="285.8" width="13" height="14.5" fill="#b0c4de"/><path d="M1218.7 289.0L1211.9 297.7" stroke="#ff0000" fill="none" stroke-width="1.3"/><path d="M1211.4 297.7H1221.6" stroke="#ff0000" fill="none" stroke-width="1.8"/><path d="M898.5 328.4L1070.4 217.4" stroke="#0000ff" stroke-width="1" fill="none"/><path d="M976.0 278.3L992.9 267.5" stroke="#b0c4de" stroke-width="14" fill="none"/><rect x="975.7" y="263.2" width="13" height="14.5" fill="#b0c4de"/><path d="M976.2 271.2H987.2 M978.9 266.1L984.4 276.3 M984.4 266.1L978.9 276.3" stroke="#0000ff" fill="none" stroke-width="1.4"/><path d="M1099.2 217.0L913.7 302.6" stroke="#0000ff" stroke-width="1" fill="none"/><path d="M1015.6 255.6L997.4 264.0" stroke="#b0c4de" stroke-width="14" fill="none"/><rect x="997.7" y="250.1" width="13" height="14.5" fill="#b0c4de"/><path d="M998.2 258.1H1009.2 M1000.9 253.0L1006.4 263.2 M1006.4 253.0L1000.9 263.2" stroke="#0000ff" fill="none" stroke-width="1.4"/><path d="M950.3 262.5L879.3 455.5" stroke="#0000ff" stroke-width="1" fill="none"/><path d="M918.3 349.6L911.3 368.4" stroke="#b0c4de" stroke-width="14" fill="none"/><rect x="906.0" y="349.3" width="13" height="14.5" fill="#b0c4de"/><path d="M906.5 357.3H917.5 M909.2 352.2L914.8 362.4 M914.8 352.2L909.2 362.4" stroke="#0000ff" fill="none" stroke-width="1.4"/><path d="M902.1 321.3L902.3 519.8" stroke="#0000ff" stroke-width="1" fill="none"/><path d="M902.2 410.6L902.2 430.5" stroke="#b0c4de" stroke-width="14" fill="none"/><rect x="893.4" y="410.8" width="13" height="14.5" fill="#b0c4de"/><path d="M893.9 418.8H904.9 M896.7 413.8L902.2 423.9 M902.2 413.8L896.7 423.9" stroke="#0000ff" fill="none" stroke-width="1.4"/><path d="M902.1 321.3L1070.4 217.4" stroke="#0000ff" stroke-width="1" fill="none"/><path d="M977.7 274.6L994.8 264.1" stroke="#b0c4de" stroke-width="14" fill="none"/><rect x="977.5" y="259.7" width="13" height="14.5" fill="#b0c4de"/><path d="M978.0 267.7H989.0 M980.7 262.6L986.2 272.7 M986.2 262.6L980.7 272.7" stroke="#0000ff" fill="none" stroke-width="1.4"/><path d="M902.1 321.3L1075.6 217.0" stroke="#0000ff" stroke-width="1" fill="none"/><path d="M980.3 274.3L997.4 264.0" stroke="#b0c4de" stroke-width="14" fill="none"/><rect x="980.0" y="259.5" width="13" height="14.5" fill="#b0c4de"/><path d="M980.5 267.5H991.5 M983.3 262.4L988.8 272.5 M988.8 262.4L983.3 272.5" stroke="#0000ff" fill="none" stroke-width="1.4"/><path d="M894.2 504.5L913.7 302.6" stroke="#0000ff" stroke-width="1" fill="none"/><path d="M903.0 413.5L904.9 393.6" stroke="#b0c4de" stroke-width="14" fill="none"/><rect x="895.2" y="393.8" width="13" height="14.5" fill="#b0c4de"/><path d="M895.7 401.8H906.7 M898.4 396.8L903.9 406.9 M903.9 396.8L898.4 406.9" stroke="#0000ff" fill="none" stroke-width="1.4"/><path d="M1004.4 609.2L879.3 455.5" stroke="#0000ff" stroke-width="1" fill="none"/><path d="M948.1 540.1L935.5 524.6" stroke="#b0c4de" stroke-width="14" fill="none"/><rect x="933.0" y="522.7" width="13" height="14.5" fill="#b0c4de"/><path d="M933.5 530.7H944.5 M936.3 525.6L941.8 535.7 M941.8 525.6L936.3 535.7" stroke="#0000ff" fill="none" stroke-width="1.4"/><path d="M898.5 328.4L991.8 603.7" stroke="#ff0000" stroke-width="1" fill="none"/><path d="M942.0 456.6L948.4 475.5" stroke="#b0c4de" stroke-width="14" fill="none"/><rect x="936.7" y="456.0" width="13" height="14.5" fill="#b0c4de"/><rect x="938.3" y="458.8" width="8.8" height="10.5" stroke="#ff0000" fill="none" stroke-width="1.2"/><path d="M898.5 328.4L1167.2 236.9" stroke="#ff0000" stroke-width="1" fill="none"/><path d="M1023.4 285.9L1042.3 279.4" stroke="#b0c4de" stroke-width="14" fill="none"/><rect x="1024.3" y="272.6" width="13" height="14.5" fill="#b0c4de"/><rect x="1025.9" y="275.3" width="8.8" height="10.5" stroke="#ff0000" fill="none" stroke-width="1.2"/><path d="M894.2 504.5L1164.3 605.5" stroke="#ff0000" stroke-width="1" fill="none"/><path d="M1019.9 551.5L1038.6 558.5" stroke="#b0c4de" stroke-width="14" fill="none"/><rect x="1020.8" y="545.0" width="13" height="14.5" fill="#b0c4de"/><rect x="1022.4" y="547.7" width="8.8" height="10.5" stroke="#ff0000" fill="none" stroke-width="1.2"/><path d="M892.5 340.6L1004.4 609.2" stroke="#ff0000" stroke-width="1" fill="none"/><path d="M944.6 465.7L952.3 484.2" stroke="#b0c4de" stroke-width="14" fill="none"/><rect x="939.9" y="464.9" width="13" height="14.5" fill="#b0c4de"/><rect x="941.5" y="467.6" width="8.8" height="10.5" stroke="#ff0000" fill="none" stroke-width="1.2"/><path d="M1271.2 353.5L1021.4 225.3" stroke="#ff0000" stroke-width="1" fill="none"/><path d="M1155.2 294.0L1137.4 284.8" stroke="#b0c4de" stroke-width="14" fill="none"/><rect x="1137.8" y="279.3" width="13" height="14.5" fill="#b0c4de"/><rect x="1139.4" y="282.1" width="8.8" height="10.5" stroke="#ff0000" fill="none" stroke-width="1.2"/><path d="M1271.2 353.5L1146.0 612.4" stroke="#ff0000" stroke-width="1" fill="none"/><path d="M1212.9 474.0L1204.2 492.0" stroke="#b0c4de" stroke-width="14" fill="none"/><rect x="1200.1" y="472.9" width="13" height="14.5" fill="#b0c4de"/><rect x="1201.7" y="475.7" width="8.8" height="10.5" stroke="#ff0000" fill="none" stroke-width="1.2"/><path d="M1271.2 353.5L1013.0 228.2" stroke="#ff0000" stroke-width="1" fill="none"/><path d="M1151.1 295.2L1133.1 286.5" stroke="#b0c4de" stroke-width="14" fill="none"/><rect x="1133.6" y="280.8" width="13" height="14.5" fill="#b0c4de"/><rect x="1135.2" y="283.5" width="8.8" height="10.5" stroke="#ff0000" fill="none" stroke-width="1.2"/><path d="M1099.2 217.0L894.2 504.5" stroke="#0000ff" stroke-width="1" fill="none"/><path d="M1002.5 352.6L990.9 368.9" stroke="#b0c4de" stroke-width="14" fill="none"/><rect x="988.5" y="351.9" width="13" height="14.5" fill="#b0c4de"/><path d="M989.3 364.5L994.5 354.9L999.7 364.5" stroke="#0000ff" fill="none" stroke-width="1.2"/><path d="M988.6 364.5H1000.4" stroke="#0000ff" fill="none" stroke-width="1.8"/><path d="M1099.2 217.0L1250.5 530.6" stroke="#0000ff" stroke-width="1" fill="none"/><path d="M1170.5 364.8L1179.2 382.8" stroke="#b0c4de" stroke-width="14" fill="none"/><rect x="1166.6" y="364.9" width="13" height="14.5" fill="#b0c4de"/><path d="M1167.4 377.5L1172.6 367.9L1177.8 377.5" stroke="#0000ff" fill="none" stroke-width="1.2"/><path d="M1166.7 377.5H1178.5" stroke="#0000ff" fill="none" stroke-width="1.8"/><path d="M1099.2 217.0L1245.3 538.0" stroke="#0000ff" stroke-width="1" fill="none"/><path d="M1168.1 368.4L1176.4 386.6" stroke="#b0c4de" stroke-width="14" fill="none"/><rect x="1164.0" y="368.6" width="13" height="14.5" fill="#b0c4de"/><path d="M1164.8 381.2L1170.0 371.6L1175.2 381.2" stroke="#0000ff" fill="none" stroke-width="1.2"/><path d="M1164.1 381.2H1175.9" stroke="#0000ff" fill="none" stroke-width="1.8"/><path d="M950.3 262.5L1004.4 609.2" stroke="#0000ff" stroke-width="1" fill="none"/><path d="M975.8 426.0L978.9 445.8" stroke="#b0c4de" stroke-width="14" fill="none"/><rect x="969.1" y="427.0" width="13" height="14.5" fill="#b0c4de"/><path d="M969.9 439.6L975.1 430.0L980.3 439.6" stroke="#0000ff" fill="none" stroke-width="1.2"/><path d="M969.2 439.6H981.0" stroke="#0000ff" fill="none" stroke-width="1.8"/><path d="M902.1 321.3L1083.4 623.6" stroke="#0000ff" stroke-width="1" fill="none"/><path d="M987.6 463.9L997.9 481.0" stroke="#b0c4de" stroke-width="14" fill="none"/><rect x="984.6" y="463.5" width="13" height="14.5" fill="#b0c4de"/><path d="M985.4 476.1L990.6 466.5L995.8 476.1" stroke="#0000ff" fill="none" stroke-width="1.2"/><path d="M984.7 476.1H996.5" stroke="#0000ff" fill="none" stroke-width="1.8"/><path d="M894.2 504.5L1250.5 530.6" stroke="#0000ff" stroke-width="1" fill="none"/><path d="M1062.4 516.8L1082.3 518.3" stroke="#b0c4de" stroke-width="14" fill="none"/><rect x="1064.1" y="508.6" width="13" height="14.5" fill="#b0c4de"/><path d="M1064.9 521.2L1070.1 511.6L1075.3 521.2" stroke="#0000ff" fill="none" stroke-width="1.2"/><path d="M1064.2 521.2H1076.0" stroke="#0000ff" fill="none" stroke-width="1.8"/><path d="M894.2 504.5L1245.3 538.0" stroke="#0000ff" stroke-width="1" fill="none"/><path d="M1059.8 520.3L1079.7 522.2" stroke="#b0c4de" stroke-width="14" fill="none"/><rect x="1061.5" y="512.4" width="13" height="14.5" fill="#b0c4de"/><path d="M1062.3 525.0L1067.5 515.4L1072.7 525.0" stroke="#0000ff" fill="none" stroke-width="1.2"/><path d="M1061.6 525.0H1073.4" stroke="#0000ff" fill="none" stroke-width="1.8"/><path d="M902.3 519.8L1250.5 530.6" stroke="#0000ff" stroke-width="1" fill="none"/><path d="M1066.4 524.9L1086.4 525.5" stroke="#b0c4de" stroke-width="14" fill="none"/><rect x="1068.2" y="516.3" width="13" height="14.5" fill="#b0c4de"/><path d="M1069.0 528.9L1074.2 519.3L1079.4 528.9" stroke="#0000ff" fill="none" stroke-width="1.2"/><path d="M1068.3 528.9H1080.1" stroke="#0000ff" fill="none" stroke-width="1.8"/><path d="M898.5 328.4L1271.2 353.5" stroke="#ff0000" stroke-width="1" fill="none"/><path d="M1074.8 340.3L1094.8 341.6" stroke="#b0c4de" stroke-width="14" fill="none"/><rect x="1076.2" y="331.8" width="13" height="14.5" fill="#b0c4de"/><rect x="1077.7" y="334.2" width="7" height="6.5" stroke="#ff0000" fill="none" stroke-width="1.2"/><path d="M1081.2 337.8V345.2H1086.7" stroke="#ff0000" fill="none" stroke-width="1.2"/><path d="M1271.2 353.5L991.8 603.7" stroke="#ff0000" stroke-width="1" fill="none"/><path d="M1138.9 471.9L1124.1 485.3" stroke="#b0c4de" stroke-width="14" fill="none"/><rect x="1122.9" y="469.4" width="13" height="14.5" fill="#b0c4de"/><rect x="1124.4" y="471.9" width="7" height="6.5" stroke="#ff0000" fill="none" stroke-width="1.2"/><path d="M1127.9 475.4V482.9H1133.4" stroke="#ff0000" fill="none" stroke-width="1.2"/><path d="M1099.2 217.0L1164.3 605.5" stroke="#c000c0" stroke-width="1" fill="none"/><path d="M1130.1 401.4L1133.4 421.1" stroke="#b0c4de" stroke-width="14" fill="none"/><rect x="1123.3" y="403.1" width="13" height="14.5" fill="#b0c4de"/><path d="M1123.8 408.1H1134.8" stroke="#c000c0" fill="none" stroke-width="1.6"/><path d="M1124.8 415.1L1129.3 408.1L1133.8 415.1" stroke="#c000c0" fill="none" stroke-width="1.2"/><path d="M1164.3 605.5L913.7 302.6" stroke="#c000c0" stroke-width="1" fill="none"/><path d="M1045.4 461.8L1032.6 446.3" stroke="#b0c4de" stroke-width="14" fill="none"/><rect x="1030.6" y="445.8" width="13" height="14.5" fill="#b0c4de"/><path d="M1031.1 450.8H1042.1" stroke="#c000c0" fill="none" stroke-width="1.6"/><path d="M1032.1 457.8L1036.6 450.8L1041.1 457.8" stroke="#c000c0" fill="none" stroke-width="1.2"/><path d="M902.1 321.3L1250.5 530.6" stroke="#000000" stroke-width="1" fill="none"/><path d="M1067.7 420.8L1084.9 431.1" stroke="#b0c4de" stroke-width="14" fill="none"/><rect x="1068.9" y="417.0" width="13" height="14.5" fill="#b0c4de"/><circle cx="1071.9" cy="427.3" r="1.9" stroke="#000000" fill="none" stroke-width="1.1"/><circle cx="1078.1" cy="422.4" r="1.9" stroke="#000000" fill="none" stroke-width="1.1"/><path d="M1073.3 426.1L1076.7 423.5" stroke="#000000" fill="none" stroke-width="1.1"/><g transform="translate(1005.9 171.2) scale(1)" stroke="#000" fill="none" stroke-linecap="butt" stroke-linejoin="miter"><path d="M3.8 -8.4C-4.5 -9.5 -7 -0.5 3.2 1.4C3.5 1.4 3.8 1 3.5 0.7C0.6 -2 1 -5.6 3.8 -8.4Z" fill="#000" stroke="none"/><path d="M0 0.4V8.4M-3.1 4.2H3.1" stroke-width="1.54"/></g><text x="1013.7" y="168.7" font-family="DejaVu Sans, sans-serif" font-size="8.3" fill="#000" letter-spacing="1.2">19</text><g transform="translate(1067.7 178.5) scale(1)" stroke="#000" fill="none" stroke-linecap="butt" stroke-linejoin="miter"><path d="M-3.9 3.6C-7.2 0 -5.5 -7 0 -7C5.5 -7 7.2 0 3.9 3.6" stroke-width="1.65"/><circle cx="-3.3" cy="5.2" r="1.6" stroke-width="1.43"/><circle cx="3.3" cy="5.2" r="1.6" stroke-width="1.43"/></g><text x="1075.7" y="176.5" font-family="DejaVu Sans, sans-serif" font-size="8.3" fill="#000" letter-spacing="1.2">5</text><g transform="translate(1099.4 197.8) scale(1)" stroke="#000" fill="none" stroke-linecap="butt" stroke-linejoin="miter"><path d="M-4.6 -6.6C2 -7 5 -3 4.6 0.5C4.2 4 1 6.8 -4.2 6.6C-0.5 4.2 1.2 1.5 0.8 -1.5C0.5 -4 -1.5 -6 -4.6 -6.6Z" stroke-width="1.65"/></g><text x="1107.8" y="195.2" font-family="DejaVu Sans, sans-serif" font-size="8.3" fill="#000" letter-spacing="1.2">26</text><g transform="translate(938.8 246.5) scale(1)" stroke="#000" fill="none" stroke-linecap="butt" stroke-linejoin="miter"><circle cx="0" cy="-1.6" r="2.9" stroke-width="1.76"/><path d="M-3.6 -8.2C-3.4 -5 -2 -4.5 0 -4.5C2 -4.5 3.4 -5 3.6 -8.2M0 1.3V8.2M-3.2 5H3.2" stroke-width="1.76"/></g><text x="946.5" y="244.3" font-family="DejaVu Sans, sans-serif" font-size="8.3" fill="#000" letter-spacing="1.2">11</text><g transform="translate(849.1 302.1) scale(1)" stroke="#000" fill="none" stroke-linecap="butt" stroke-linejoin="miter"><circle cx="0" cy="0" r="5.6" stroke-width="1.87"/><circle cx="0" cy="0" r="1" fill="#000" stroke="none"/></g><text x="856.7" y="300.0" font-family="DejaVu Sans, sans-serif" font-size="8.3" fill="#000" letter-spacing="1.2">5</text><g transform="translate(869.4 301.3) scale(1)" stroke="#000" fill="none" stroke-linecap="butt" stroke-linejoin="miter"><circle cx="0" cy="-3.7" r="3.3" stroke-width="1.76"/><path d="M0 -0.4V7.3M-3.4 3.6H3.4" stroke-width="1.76"/></g><text x="877.7" y="298.5" font-family="DejaVu Sans, sans-serif" font-size="8.3" fill="#000" letter-spacing="1.2">3</text><g transform="translate(875.1 332.6) scale(1)" stroke="#000" fill="none" stroke-linecap="butt" stroke-linejoin="miter"><path d="M-5.4 -6.6C-3.6 -7.6 -2.2 -6.4 -2.8 -3.6C-3.2 -1.6 -4.2 0.8 -5.6 2.6H5.8M2.4 -7.6V7.8" stroke-width="1.87"/></g><text x="882.5" y="328.5" font-family="DejaVu Sans, sans-serif" font-size="8.3" fill="#000" letter-spacing="1.2">9</text><g transform="translate(843.0 461.2) scale(1)" stroke="#000" fill="none" stroke-linecap="butt" stroke-linejoin="miter"><path d="M-3 -9.5C5.3 -10.4 7 -3 -1.6 -1C-2 -1 -2.4 -1.4 -2 -1.8C0.6 -4.2 0.2 -7.4 -3 -9.5Z" fill="#000" stroke="none"/><path d="M0 -1.6V4.6M-2.6 1.6H2.6" stroke-width="1.43"/><path d="M0 4.6L2.2 7.2L0 9.6L-2.2 7.2Z" stroke-width="1.21"/></g><text x="850.5" y="457.8" font-family="DejaVu Sans, sans-serif" font-size="8.3" fill="#000" letter-spacing="1.2">12</text><g transform="translate(844.6 526.2) scale(1)" stroke="#000" fill="none" stroke-linecap="butt" stroke-linejoin="miter"><circle cx="-1.9" cy="2.8" r="3.3" stroke-width="1.54"/><path d="M0.5 0.3L4.6 -4.9" stroke-width="1.54"/><path d="M5.9 -7L1.4 -5.1L4.7 -2.4Z" fill="#000" stroke="none"/></g><text x="852.8" y="522.7" font-family="DejaVu Sans, sans-serif" font-size="8.3" fill="#000" letter-spacing="1.2">27</text><g transform="translate(886.0 527.9) scale(1)" stroke="#000" fill="none" stroke-linecap="butt" stroke-linejoin="miter"><path d="M-2.6 -7.8V1.5M-5.6 -4.8H0.6M-2.6 -1C-0.5 -4.4 4.6 -4.2 5 -0.9C5.4 2.2 1.4 3.6 1.6 6C1.8 7.6 3.2 8 4.4 7" stroke-width="1.65"/></g><text x="893.7" y="523.3" font-family="DejaVu Sans, sans-serif" font-size="8.3" fill="#000" letter-spacing="1.2">1</text><g transform="translate(989.8 640.2) scale(1)" stroke="#000" fill="none" stroke-linecap="butt" stroke-linejoin="miter"><path d="M-5.6 -7.4C-3.8 -5.2 -3.8 0.6 -5.6 2.8M5.6 -7.4C3.8 -5.2 3.8 0.6 5.6 2.8M-4.2 -2.3H4.2M0 -7.4V3" stroke-width="1.65"/><circle cx="0" cy="5.2" r="2.1" stroke-width="1.43"/></g><text x="997.5" y="637.5" font-family="DejaVu Sans, sans-serif" font-size="8.3" fill="#000" letter-spacing="1.2">10</text><g transform="translate(1091.5 674.5) scale(1)" stroke="#000" fill="none" stroke-linecap="butt" stroke-linejoin="miter"><path d="M-3.9 -3.6C-7.2 0 -5.5 7 0 7C5.5 7 7.2 0 3.9 -3.6" stroke-width="1.65"/><circle cx="-3.3" cy="-5.2" r="1.6" stroke-width="1.43"/><circle cx="3.3" cy="-5.2" r="1.6" stroke-width="1.43"/></g><text x="1098.4" y="673.0" font-family="DejaVu Sans, sans-serif" font-size="8.3" fill="#000" letter-spacing="1.2">5</text><g transform="translate(1171.0 619.5) scale(1)" stroke="#cc0000" fill="none" stroke-linecap="butt" stroke-linejoin="miter"><path d="M-1.2 -8.4V3.4M-1.2 -2.2L3.4 -6.4M-1.2 -2.2L3.4 1.2" stroke-width="1.38"/><circle cx="-1.2" cy="5.8" r="2.4" stroke-width="1.43"/></g><text x="1179.0" y="617.0" font-family="DejaVu Sans, sans-serif" font-size="8.3" fill="#000" letter-spacing="1.2">27</text><g transform="translate(1281.0 548.4) scale(1)" stroke="#cc0000" fill="none" stroke-linecap="butt" stroke-linejoin="miter"><path d="M-5.6 -6.8C-5.4 -1 -3 0.8 0 0.8C3 0.8 5.4 -1 5.6 -6.8M0 0.8V7.4M-3 4.3H3" stroke-width="1.43"/><circle cx="0" cy="-4.6" r="2.1" stroke-width="1.32"/></g><text x="1288.8" y="544.4" font-family="DejaVu Sans, sans-serif" font-size="8.3" fill="#000" letter-spacing="1.2">29</text><g transform="translate(1322.0 334.3) scale(1)" stroke="#cc0000" fill="none" stroke-linecap="butt" stroke-linejoin="miter"><path d="M-5.5 -7.4C-5.3 -1 -3.2 1 0 1C3.2 1 5.3 -1 5.5 -7.4M0 -7.4V7.6M-3.3 4.5H3.3" stroke-width="1.43"/></g><text x="1329.4" y="330.9" font-family="DejaVu Sans, sans-serif" font-size="8.3" fill="#000" letter-spacing="1.2">21</text></svg><div id="frame"></div></body></html>
